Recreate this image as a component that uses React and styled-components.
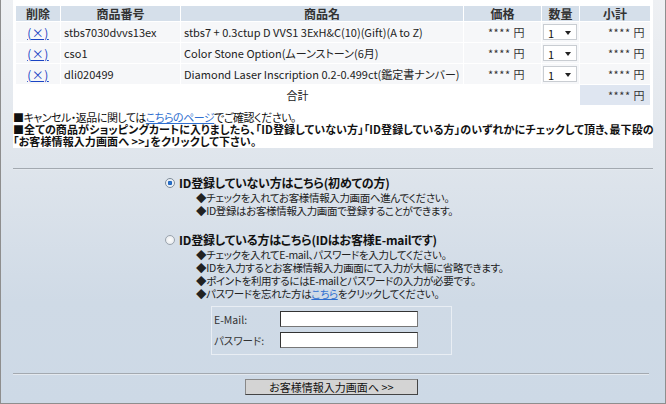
import React from "react";
import styled, { createGlobalStyle } from "styled-components";

const Global = createGlobalStyle`
  html, body { margin: 0; padding: 0; }
  body {
    font-family: "Noto Sans CJK JP", "Liberation Sans", sans-serif;
    font-feature-settings: "palt";
    color: #222;
  }
`;

const Frame = styled.div`
  width: 666px;
  height: 404px;
  box-sizing: border-box;
  border-left: 1px solid #8e8e8e;
  border-right: 1px solid #8e8e8e;
  border-bottom: 1px solid #8e8e8e;
  background: linear-gradient(#eef0f3 0%, #dfe5ec 40%, #cfdae6 75%, #cdd9e6 100%);
  padding: 0 12px;
  overflow: hidden;
`;

const Panel = styled.div`
  background: #fff;
  height: 148px;
  box-sizing: border-box;
  padding: 5px 2px 0 2px;
`;

const CartTable = styled.table`
  border-collapse: separate;
  border-spacing: 1px;
  width: 636px;
  font-size: 11px;
  table-layout: fixed;
`;

const Th = styled.th`
  background: #d5dfea;
  color: #333;
  font-weight: bold;
  font-size: 12px;
  height: 15px;
  line-height: 15px;
  padding: 0;
  text-align: center;
`;

const Td = styled.td`
  background: ${(p) => (p.$bg ? p.$bg : "#f6f7f9")};
  height: 20px;
  padding: 0 ${(p) => p.$pr || 3}px 0 ${(p) => p.$pl || 3}px;
  text-align: ${(p) => p.$align || "left"};
  white-space: nowrap;
  color: #222;
`;

const DelLink = styled.a`
  color: #1a44c4;
  text-decoration: underline;
  font-size: 12px;
  letter-spacing: 0.5px;
`;

const Price = styled.span`
  color: #333;
  letter-spacing: 0.5px;
`;

const SelectWrap = styled.span`
  position: relative;
  display: inline-block;
  &::after {
    content: "";
    position: absolute;
    right: 6px;
    top: 7px;
    border-left: 3px solid transparent;
    border-right: 3px solid transparent;
    border-top: 4px solid #222;
    pointer-events: none;
  }
`;

const Qty = styled.select`
  appearance: none;
  width: 34px;
  height: 16px;
  border: 1px solid #c9cdd2;
  background: #fff;
  font-size: 11px;
  font-family: inherit;
  padding: 0 0 0 4px;
  margin: 0;
  color: #111;
  display: block;
`;

const Notes = styled.div`
  margin-top: 5px;
  margin-left: -2px;
  font-size: 11px;
  line-height: 12px;
`;

const NoteLine = styled.div`
  font-weight: ${(p) => (p.$bold ? "bold" : "normal")};
  color: #111;
  white-space: nowrap;
  letter-spacing: ${(p) => (p.$bold ? "0.1px" : "-0.5px")};
`;

const TextLink = styled.a`
  color: #2f6fd0;
  text-decoration: underline;
`;

const Rule = styled.div`
  height: 1px;
  background: #a3a9b0;
  border-bottom: 1px solid #e4e9ef;
  margin-top: ${(p) => p.$mt}px;
  margin-right: ${(p) => p.$mr || 0}px;
`;

const Options = styled.div`
  padding-left: 152px;
  margin-top: 6px;
`;

const OptionTitle = styled.label`
  display: flex;
  align-items: center;
  gap: 3px;
  font-size: 12px;
  font-weight: bold;
  line-height: 13px;
  color: #111;
  letter-spacing: -0.2px;
  margin-top: ${(p) => p.$mt || 0}px;
`;

const Radio = styled.input.attrs({ type: "radio" })`
  appearance: none;
  width: 10px;
  height: 10px;
  margin: 0 1px 0 0;
  border-radius: 50%;
  border: 1px solid #9aa3ad;
  background: radial-gradient(circle, #fdfdfd 0%, #e2e6ea 100%);
  box-sizing: border-box;
  &:checked {
    background: radial-gradient(circle, #2f7fd8 0%, #1d5fb8 35%, #e8eef5 45%, #f5f7f9 100%);
    border-color: #7d8a98;
  }
`;

const Bullets = styled.ul`
  list-style: none;
  margin: 2px 0 0 0;
  padding: 0 0 0 31px;
  font-size: 10.5px;
  line-height: 13px;
  letter-spacing: -0.35px;
  color: #222;
`;

const Bullet = styled.li`
  white-space: nowrap;
  &::before { content: "◆"; }
`;

const LoginBox = styled.div`
  margin: 6px 0 0 46px;
  width: 241px;
  box-sizing: border-box;
  border: 1px solid #e9eef4;
  padding: 4px 0 6px 2px;
  display: grid;
  grid-template-columns: 66px 138px;
  row-gap: 5px;
  align-items: center;
`;

const FieldLabel = styled.span`
  font-size: 10.5px;
  color: #333;
`;

const Field = styled.input`
  width: 138px;
  height: 16px;
  box-sizing: border-box;
  border: 1px solid #333;
  border-right-color: #777;
  border-bottom-color: #777;
  background: #fff;
  margin: 0;
  padding: 0 3px;
`;

const SubmitRow = styled.div`
  display: flex;
  margin-top: 4px;
  padding-left: 232px;
`;

const Submit = styled.button`
  width: 173px;
  height: 16px;
  box-sizing: border-box;
  background: #d4d4d4;
  border: 1px solid #444;
  border-top-color: #888;
  border-left-color: #888;
  font-family: inherit;
  font-feature-settings: "palt";
  font-size: 11px;
  line-height: 14px;
  padding: 0;
  color: #111;
`;

const items = [
  { code: "stbs7030dvvs13ex", name: "stbs7 + 0.3ctup D VVS1 3ExH&C(10)(Gift)(A to Z)" },
  { code: "cso1", name: "Color Stone Option(ムーンストーン(6月)" },
  { code: "dli020499", name: "Diamond Laser Inscription 0.2-0.499ct(鑑定書ナンバー)" },
];

export default function App() {
  return (
    <>
      <Global />
      <Frame>
        <Panel>
          <CartTable>
            <colgroup>
              <col style={{ width: 44 }} />
              <col style={{ width: 119 }} />
              <col style={{ width: 282 }} />
              <col style={{ width: 77 }} />
              <col style={{ width: 37 }} />
              <col style={{ width: 70 }} />
            </colgroup>
            <thead>
              <tr>
                <Th>削除</Th>
                <Th>商品番号</Th>
                <Th>商品名</Th>
                <Th>価格</Th>
                <Th>数量</Th>
                <Th>小計</Th>
              </tr>
            </thead>
            <tbody>
              {items.map((it) => (
                <tr key={it.code}>
                  <Td $align="center">
                    <DelLink href="#">(×)</DelLink>
                  </Td>
                  <Td>{it.code}</Td>
                  <Td>{it.name}</Td>
                  <Td $align="right" $pr={16}>
                    <Price>**** 円</Price>
                  </Td>
                  <Td $pl={1} $pr={1}>
                    <SelectWrap>
                      <Qty defaultValue="1">
                        <option value="1">1</option>
                      </Qty>
                    </SelectWrap>
                  </Td>
                  <Td $align="right" $pr={5}>
                    <Price>**** 円</Price>
                  </Td>
                </tr>
              ))}
              <tr>
                <Td colSpan={5} $align="center" $bg="#fff">合計</Td>
                <Td $align="right" $pr={5} $bg="#dfe6f1">
                  <Price>**** 円</Price>
                </Td>
              </tr>
            </tbody>
          </CartTable>
          <Notes>
            <NoteLine>
              ■キャンセル・返品に関しては<TextLink href="#">こちらのページ</TextLink>でご確認ください。
            </NoteLine>
            <NoteLine $bold>
              ■全ての商品がショッピングカートに入りましたら、「ID登録していない方」「ID登録している方」のいずれかにチェックして頂き、最下段の
            </NoteLine>
            <NoteLine $bold>「お客様情報入力画面へ &gt;&gt;」をクリックして下さい。</NoteLine>
          </Notes>
        </Panel>

        <Rule $mt={20} />

        <Options>
          <OptionTitle>
            <Radio name="member" defaultChecked />
            ID登録していない方はこちら(初めての方)
          </OptionTitle>
          <Bullets>
            <Bullet>チェックを入れてお客様情報入力画面へ進んでください。</Bullet>
            <Bullet>ID登録はお客様情報入力画面で登録することができます。</Bullet>
          </Bullets>

          <OptionTitle $mt={16}>
            <Radio name="member" />
            ID登録している方はこちら(IDはお客様E-mailです)
          </OptionTitle>
          <Bullets>
            <Bullet>チェックを入れてE-mail、パスワードを入力してください。</Bullet>
            <Bullet>IDを入力するとお客様情報入力画面にて入力が大幅に省略できます。</Bullet>
            <Bullet>ポイントを利用するにはE-mailとパスワードの入力が必要です。</Bullet>
            <Bullet>
              パスワードを忘れた方は<TextLink href="#">こちら</TextLink>をクリックしてください。
            </Bullet>
          </Bullets>

          <LoginBox>
            <FieldLabel>E-Mail:</FieldLabel>
            <Field type="text" />
            <FieldLabel>パスワード:</FieldLabel>
            <Field type="password" />
          </LoginBox>
        </Options>

        <Rule $mt={18} $mr={4} />

        <SubmitRow>
          <Submit type="button">お客様情報入力画面へ &gt;&gt;</Submit>
        </SubmitRow>
      </Frame>
    </>
  );
}
